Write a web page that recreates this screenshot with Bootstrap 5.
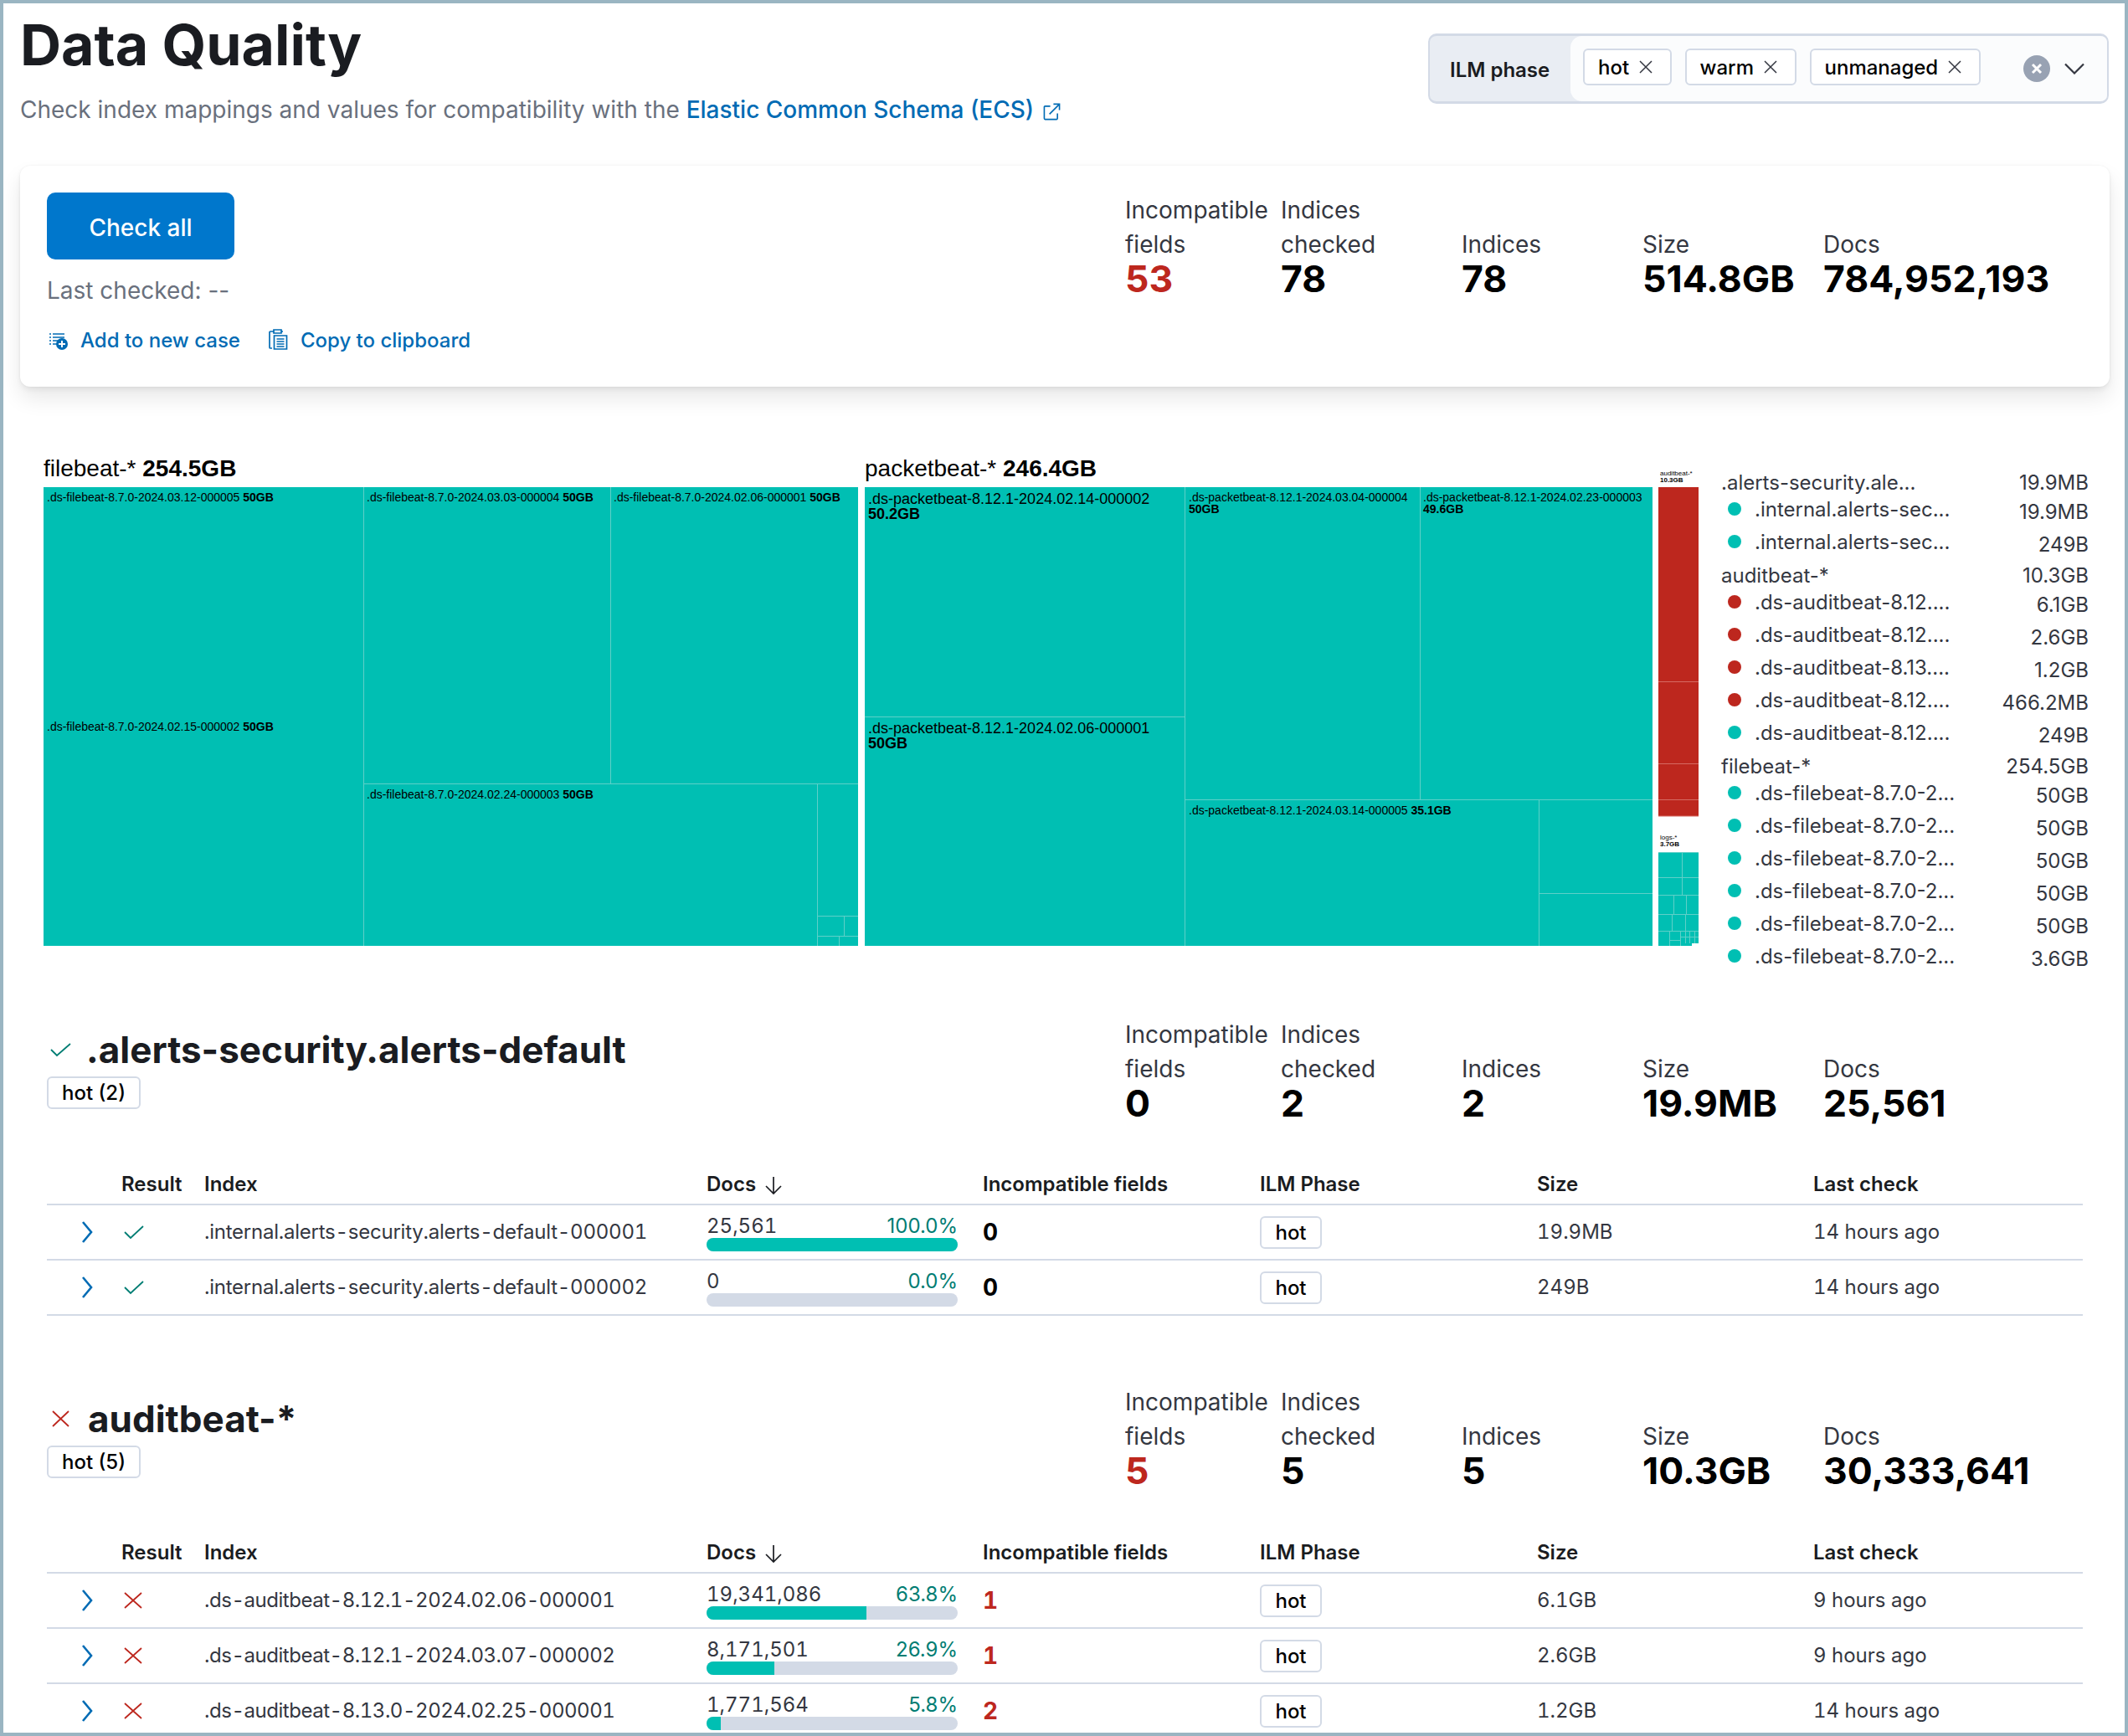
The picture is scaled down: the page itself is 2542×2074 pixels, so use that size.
<!doctype html>
<html lang="en">
<head>
<meta charset="utf-8">
<title>Data Quality</title>
<link href="https://cdn.jsdelivr.net/npm/bootstrap@5.3.0/dist/css/bootstrap.min.css" rel="stylesheet">
<style>
html,body{margin:0;background:#fff}
body{font-family:Inter,"Noto Sans",sans-serif;color:#343741}
.frame{height:2074px;border:4px solid #9ab5c2;overflow:hidden;background:#fff}
.head-row{height:194px;padding:0 19px 0 20px}
.page-title{font-size:68px;line-height:72px;font-weight:700;color:#1a1c21;margin:13px 0 0;letter-spacing:0}
.page-sub{font-size:28px;line-height:40px;color:#69707d;margin:22px 0 0}
.page-sub a,.act-link{color:#006bb4;text-decoration:none;font-weight:500}
.pop-ic{margin-left:3px}
.ilm-group{width:813px;height:84px;margin-top:36px;background:#e9edf3;border:2px solid #d3dae6;border-top-width:3px;border-bottom-width:3px;border-radius:10px;overflow:hidden}
.ilm-label{width:168px;padding:3px 0 0 24px;font-size:24px;font-weight:600;color:#1a1c21}
.ilm-body{background:#fbfcfd;border-radius:14px 0 0 14px;padding:0 27px 4px 15px}
.chip-box{height:44px;border:2px solid #d3dae6;border-radius:6px;background:#fff;padding:0 19.500px 0 16px;font-size:24px;font-weight:500;color:#000;line-height:41px;white-space:nowrap}
.chip-box svg{margin-left:11px;margin-top:-4px}
.clear-dot{width:32px;height:32px;margin-left:auto;margin-right:17px;margin-top:4px}
.sum-card{margin:0 18px 0 20px;height:264px;padding:32px;border:0;border-radius:12px;box-shadow:0 0 3px rgba(0,0,0,.06),0 4px 6px rgba(0,0,0,.05),0 14px 26px rgba(0,0,0,.09)}
.check-btn{width:224px;height:80px;padding-top:9px;background:#07c;border:0;border-radius:10px;color:#fff;font-size:28px;font-weight:500}
.last-line{font-size:28px;line-height:40px;color:#69707d;margin-top:17px}
.act-row{margin-top:20px;font-size:24px;line-height:40px}
.add-ic{margin:0 15px 0 3px}
.clip-ic{margin:-4px 15px 0 34px}
.stat-wrap{width:1144px;flex:none}
.sum-card .stat-wrap{padding-top:1px}
.stat-a{width:186px}.stat-b,.stat-c,.stat-d{width:216px}.stat-e{width:310px}
.stat-col{display:flex;flex-direction:column;justify-content:flex-end}
.stat-lab{font-size:28px;line-height:41px;color:#343741;font-weight:400}
.stat-val{font-size:44.500px;line-height:46px;font-weight:700;color:#000;margin-top:-3px;white-space:nowrap}
.stat-bad{color:#bd271e}
.map-row{height:600px;margin-top:78px}
.map-svg{flex:none;display:block}
.map-svg text{font-family:"Liberation Sans",Arial,sans-serif;fill:#000}
.lbl-s{font-size:14px}.lbl-m{font-size:18px}.lbl-l{font-size:28px}.lbl-t{font-size:8px}
.bold-t{font-weight:700}
.tile-teal{fill:#00bfb3}.tile-red{fill:#bd271e}
.ln-teal{stroke:#5fd0c8;stroke-width:1}.ln-red{stroke:#d66a63;stroke-width:1}
.leg-box{width:445px;padding:23.500px 0 0 6px;font-size:24px;color:#343741;flex:none}
.leg-grp{height:26px;line-height:26px;margin-top:7px}
.leg-box .leg-grp:first-child{margin-top:0}
.leg-box .leg-far{margin-top:7.500px}
.leg-sub{height:39px;line-height:34px;padding-top:2px}
.leg-dot{width:16px;height:16px;border-radius:50%;margin-left:8px;margin-right:16px;flex:none}
.dot-ok{background:#00bfb3}.dot-bad{background:#bd271e}
.leg-val{margin-left:auto;padding-top:3px}
.leg-grp .leg-val{padding-top:0}
.sect-block{padding:0 50px 0 52px;margin-top:83px}
.sect-one{margin-top:76px}
.sect-title{font-size:44px;line-height:56px;font-weight:700;color:#1a1c21;margin:0}
.sect-left{padding-top:10px}
.sect-two .sect-left{padding-top:12px}
.sect-icon{width:25px;margin:0 18px 0 4px;flex:none}
.sect-two .sect-icon{margin-right:20px}
.hot-tag{display:inline-block;height:39px;border:2px solid #d3dae6;border-radius:6px;background:#fff;padding:0 16px;font-size:24px;font-weight:500;color:#000;line-height:36px;margin-top:4px}
.dq-table{table-layout:fixed;margin:50px 0 0;width:2432px;--bs-table-bg:transparent;--bs-table-color:#343741}
.sect-two .dq-table{margin-top:51px}
.dq-table th{height:48px;padding:0;border-bottom:2px solid #d3dae6;font-size:24px;font-weight:600;color:#1a1c21;vertical-align:middle}
.dq-table td{height:66px;padding:0;border-bottom:2px solid #d3dae6;font-size:24px;font-variant-numeric:tabular-nums;color:#343741;vertical-align:middle;white-space:nowrap}
.dq-table td.idx-int{letter-spacing:-.24px}
.dq-table td.idx-ds{letter-spacing:-.47px}
.c-exp{width:89px}.c-res{width:99px}.c-idx{width:600px}.c-doc{width:330px}.c-inc{width:331px}.c-ilm{width:331px}.c-siz{width:330px}.c-las{width:322px}
.exp-ic{margin-left:41px;display:block}
.res-ic{margin-left:3px;display:block}
.sort-ic{margin-left:10px}
.doc-box{width:300px}
.doc-top{font-size:24px;line-height:30px;height:30px;padding-top:1px}
.doc-pct{color:#017d73;font-variant-numeric:normal}
.doc-bar{height:16px;background:#d3dae6;border-radius:8px}
.doc-bar .progress-bar{background:#00bfb3}
.inc-n{font-size:28px;font-weight:700;color:#000}
.inc-bad{color:#bd271e}
.td-tag{display:block;width:74px;height:39px;border:2px solid #d3dae6;border-radius:6px;background:#fff;text-align:center;font-size:24px;font-weight:500;color:#000;line-height:35px}
</style>
</head>
<body>
<div class="frame">

<div class="head-row d-flex justify-content-between align-items-start">
  <div>
    <h1 class="page-title">Data Quality</h1>
    <p class="page-sub">Check index mappings and values for compatibility with the <a href="#">Elastic Common Schema (ECS) <svg class="pop-ic" width="21" height="21" viewBox="0 0 22 22" fill="none" stroke="#006bb4" stroke-width="1.700"><path d="M9 4H2.500a1 1 0 0 0-1 1v14.500a1 1 0 0 0 1 1H17a1 1 0 0 0 1-1V13"/><path d="M8 14 20 2M13 1.500h7.500V9"/></svg></a></p>
  </div>
  <div class="ilm-group d-flex">
    <div class="ilm-label d-flex align-items-center">ILM phase</div>
    <div class="ilm-body flex-grow-1 d-flex align-items-center">
      <span class="chip-box me-3">hot<svg width="18" height="18" viewBox="0 0 18 18" fill="none" stroke="#343741" stroke-width="1.500"><path d="M2 2l14 14M16 2 2 16"/></svg></span>
      <span class="chip-box me-3">warm<svg width="18" height="18" viewBox="0 0 18 18" fill="none" stroke="#343741" stroke-width="1.500"><path d="M2 2l14 14M16 2 2 16"/></svg></span>
      <span class="chip-box">unmanaged<svg width="18" height="18" viewBox="0 0 18 18" fill="none" stroke="#343741" stroke-width="1.500"><path d="M2 2l14 14M16 2 2 16"/></svg></span>
      <svg class="clear-dot" viewBox="0 0 32 32"><circle cx="16" cy="16" r="16" fill="#98a2b3"/><path d="M11 11l10 10M21 11 11 21" stroke="#fff" stroke-width="3"/></svg>
      <svg width="24" height="14" viewBox="0 0 24 14" fill="none" stroke="#343741" stroke-width="2.200" class="mt-1"><path d="M1 1.500l11 11 11-11"/></svg>
    </div>
  </div>
</div>

<div class="card sum-card d-flex flex-row justify-content-between">
  <div>
    <button class="btn check-btn" type="button">Check all</button>
    <div class="last-line">Last checked: --</div>
    <div class="act-row d-flex align-items-center">
      <a class="act-link d-flex align-items-center" href="#"><svg class="add-ic" width="22" height="22" viewBox="0 0 22 22"><path d="M0 3h2M4 3h14M0 7h2M4 7h14M0 11h2M4 11h7M0 15h2M4 15h5" stroke="#006bb4" stroke-width="1.600" fill="none"/><circle cx="15" cy="15" r="7" fill="#006bb4"/><path d="M15 11v8M11 15h8" stroke="#fff" stroke-width="2"/></svg>Add to new case</a>
      <a class="act-link d-flex align-items-center" href="#"><svg class="clip-ic" width="23" height="26" viewBox="0 0 23 26" fill="none" stroke="#006bb4" stroke-width="1.700"><path d="M6 4H2a1 1 0 0 0-1 1v18a1 1 0 0 0 1 1h2M17 4h-2M6 2h9v4H6zM6.500 9h15v16h-15zM9.500 13h9M9.500 16h9M9.500 19h9M9.500 22h9"/></svg>Copy to clipboard</a>
    </div>
  </div>
  <div class="stat-wrap d-flex">
    <div class="stat-col stat-a align-self-start"><div class="stat-lab">Incompatible<br>fields</div><div class="stat-val stat-bad">53</div></div>
    <div class="stat-col stat-b align-self-start"><div class="stat-lab">Indices<br>checked</div><div class="stat-val">78</div></div>
    <div class="stat-col stat-c align-self-start"><div class="stat-lab"><br>Indices</div><div class="stat-val">78</div></div>
    <div class="stat-col stat-d align-self-start"><div class="stat-lab"><br>Size</div><div class="stat-val">514.8GB</div></div>
    <div class="stat-col stat-e align-self-start"><div class="stat-lab"><br>Docs</div><div class="stat-val">784,952,193</div></div>
  </div>
</div>

<div class="map-row d-flex">
  <svg class="map-svg" width="2046" height="600" viewBox="4 540 2046 600">
    <text class="lbl-l" x="52" y="569">filebeat-* <tspan class="bold-t">254.5GB</tspan></text>
    <rect class="tile-teal" x="52" y="582" width="973" height="548"/>
    <path class="ln-teal" fill="none" d="M434.500 582V1130M729.500 582V936M434 936.500H1025M976.500 936V1130M976 1094.500H1025M1008.500 1094V1118M976 1118.500H1025M1002.500 1118V1130"/>
    <text class="lbl-s" x="56" y="599">.ds-filebeat-8.7.0-2024.03.12-000005 <tspan class="bold-t">50GB</tspan></text>
    <text class="lbl-s" x="56" y="873">.ds-filebeat-8.7.0-2024.02.15-000002 <tspan class="bold-t">50GB</tspan></text>
    <text class="lbl-s" x="438" y="599">.ds-filebeat-8.7.0-2024.03.03-000004 <tspan class="bold-t">50GB</tspan></text>
    <text class="lbl-s" x="733" y="599">.ds-filebeat-8.7.0-2024.02.06-000001 <tspan class="bold-t">50GB</tspan></text>
    <text class="lbl-s" x="438" y="954">.ds-filebeat-8.7.0-2024.02.24-000003 <tspan class="bold-t">50GB</tspan></text>

    <text class="lbl-l" x="1033" y="569">packetbeat-* <tspan class="bold-t">246.4GB</tspan></text>
    <rect class="tile-teal" x="1033" y="582" width="941" height="548"/>
    <path class="ln-teal" fill="none" d="M1415.500 582V1130M1033 856.500H1415M1696.500 582V955M1415 955.500H1974M1838.500 955V1130M1838 1067.500H1974"/>
    <text class="lbl-m" x="1037" y="602">.ds-packetbeat-8.12.1-2024.02.14-000002</text>
    <text class="lbl-m bold-t" x="1037" y="620">50.2GB</text>
    <text class="lbl-m" x="1037" y="876">.ds-packetbeat-8.12.1-2024.02.06-000001</text>
    <text class="lbl-m bold-t" x="1037" y="894">50GB</text>
    <text class="lbl-s" x="1420" y="599">.ds-packetbeat-8.12.1-2024.03.04-000004</text>
    <text class="lbl-s bold-t" x="1420" y="613">50GB</text>
    <text class="lbl-s" x="1700" y="599">.ds-packetbeat-8.12.1-2024.02.23-000003</text>
    <text class="lbl-s bold-t" x="1700" y="613">49.6GB</text>
    <text class="lbl-s" x="1420" y="973">.ds-packetbeat-8.12.1-2024.03.14-000005 <tspan class="bold-t">35.1GB</tspan></text>

    <text class="lbl-t" x="1983" y="568">auditbeat-*</text>
    <text class="lbl-t bold-t" x="1983" y="576">10.3GB</text>
    <rect class="tile-red" x="1981" y="582" width="48" height="393"/>
    <path class="ln-red" fill="none" d="M1981 814.500H2029M1981 912.500H2029M1981 955.500H2029M1981 975H2029"/>

    <text class="lbl-t" x="1983" y="1003">logs-*</text>
    <text class="lbl-t bold-t" x="1983" y="1011">3.7GB</text>
    <path class="tile-teal" d="M1981 1018H2029V1127H2021V1130H1981Z"/>
    <path class="ln-teal" fill="none" d="M1981 1018.500H2029M1981 1048.500H2029M2009.500 1018V1069M1981 1069.500H2029M1999.500 1069V1092M2014.500 1069V1092M1981 1092.500H2029M1997.500 1092V1112M2013.500 1092V1112M1981 1112.500H2029M1994.500 1112V1130M2007.500 1112V1130M1994 1123.500H2007M2007 1119.500H2029M2013.500 1112V1127M2018.500 1112V1127M2024.500 1112V1127"/>
  </svg>
  <div class="leg-box">
    <div class="leg-grp d-flex"><span>.alerts-security.ale...</span><span class="leg-val">19.9MB</span></div>
    <div class="leg-sub d-flex align-items-start"><span class="leg-dot dot-ok mt-2"></span><span>.internal.alerts-sec...</span><span class="leg-val">19.9MB</span></div>
    <div class="leg-sub d-flex align-items-start"><span class="leg-dot dot-ok mt-2"></span><span>.internal.alerts-sec...</span><span class="leg-val">249B</span></div>
    <div class="leg-grp d-flex"><span>auditbeat-*</span><span class="leg-val">10.3GB</span></div>
    <div class="leg-sub d-flex align-items-start"><span class="leg-dot dot-bad mt-2"></span><span>.ds-auditbeat-8.12....</span><span class="leg-val">6.1GB</span></div>
    <div class="leg-sub d-flex align-items-start"><span class="leg-dot dot-bad mt-2"></span><span>.ds-auditbeat-8.12....</span><span class="leg-val">2.6GB</span></div>
    <div class="leg-sub d-flex align-items-start"><span class="leg-dot dot-bad mt-2"></span><span>.ds-auditbeat-8.13....</span><span class="leg-val">1.2GB</span></div>
    <div class="leg-sub d-flex align-items-start"><span class="leg-dot dot-bad mt-2"></span><span>.ds-auditbeat-8.12....</span><span class="leg-val">466.2MB</span></div>
    <div class="leg-sub d-flex align-items-start"><span class="leg-dot dot-ok mt-2"></span><span>.ds-auditbeat-8.12....</span><span class="leg-val">249B</span></div>
    <div class="leg-grp leg-far d-flex"><span>filebeat-*</span><span class="leg-val">254.5GB</span></div>
    <div class="leg-sub d-flex align-items-start"><span class="leg-dot dot-ok mt-2"></span><span>.ds-filebeat-8.7.0-2...</span><span class="leg-val">50GB</span></div>
    <div class="leg-sub d-flex align-items-start"><span class="leg-dot dot-ok mt-2"></span><span>.ds-filebeat-8.7.0-2...</span><span class="leg-val">50GB</span></div>
    <div class="leg-sub d-flex align-items-start"><span class="leg-dot dot-ok mt-2"></span><span>.ds-filebeat-8.7.0-2...</span><span class="leg-val">50GB</span></div>
    <div class="leg-sub d-flex align-items-start"><span class="leg-dot dot-ok mt-2"></span><span>.ds-filebeat-8.7.0-2...</span><span class="leg-val">50GB</span></div>
    <div class="leg-sub d-flex align-items-start"><span class="leg-dot dot-ok mt-2"></span><span>.ds-filebeat-8.7.0-2...</span><span class="leg-val">50GB</span></div>
    <div class="leg-sub d-flex align-items-start"><span class="leg-dot dot-ok mt-2"></span><span>.ds-filebeat-8.7.0-2...</span><span class="leg-val">3.6GB</span></div>
  </div>
</div>

<section class="sect-block sect-one">
  <div class="d-flex justify-content-between">
    <div class="sect-left">
      <div class="d-flex align-items-center">
        <svg class="sect-icon" height="17" viewBox="0 0 25 17" fill="none" stroke="#017d73" stroke-width="1.800"><path d="M1 8l7 7L24 1"/></svg>
        <h2 class="sect-title">.alerts-security.alerts-default</h2>
      </div>
      <span class="hot-tag">hot (2)</span>
    </div>
    <div class="stat-wrap d-flex">
      <div class="stat-col stat-a align-self-start"><div class="stat-lab">Incompatible<br>fields</div><div class="stat-val">0</div></div>
      <div class="stat-col stat-b align-self-start"><div class="stat-lab">Indices<br>checked</div><div class="stat-val">2</div></div>
      <div class="stat-col stat-c align-self-start"><div class="stat-lab"><br>Indices</div><div class="stat-val">2</div></div>
      <div class="stat-col stat-d align-self-start"><div class="stat-lab"><br>Size</div><div class="stat-val">19.9MB</div></div>
      <div class="stat-col stat-e align-self-start"><div class="stat-lab"><br>Docs</div><div class="stat-val">25,561</div></div>
    </div>
  </div>
  <table class="table dq-table">
    <colgroup><col class="c-exp"><col class="c-res"><col class="c-idx"><col class="c-doc"><col class="c-inc"><col class="c-ilm"><col class="c-siz"><col class="c-las"></colgroup>
    <thead><tr><th></th><th>Result</th><th>Index</th><th>Docs<svg class="sort-ic" width="22" height="22" viewBox="0 0 22 22" fill="none" stroke="#1a1c21" stroke-width="1.700"><path d="M11 1v20M2 12l9 9 9-9"/></svg></th><th>Incompatible fields</th><th>ILM Phase</th><th>Size</th><th>Last check</th></tr></thead>
    <tbody>
      <tr>
        <td><svg class="exp-ic" width="14" height="26" viewBox="0 0 14 26" fill="none" stroke="#006bb4" stroke-width="2.600"><path d="M2 1l10 12L2 25"/></svg></td>
        <td><svg class="res-ic" width="24" height="17" viewBox="0 0 24 17" fill="none" stroke="#017d73" stroke-width="1.800"><path d="M1 8l7 7L23 1"/></svg></td>
        <td class="idx-int">.internal.alerts-security.alerts-default-000001</td>
        <td><div class="doc-box"><div class="doc-top d-flex justify-content-between"><span>25,561</span><span class="doc-pct">100.0%</span></div><div class="progress doc-bar"><div class="progress-bar" style="width:100%"></div></div></div></td>
        <td><span class="inc-n">0</span></td>
        <td><span class="td-tag">hot</span></td>
        <td>19.9MB</td>
        <td>14 hours ago</td>
      </tr>
      <tr>
        <td><svg class="exp-ic" width="14" height="26" viewBox="0 0 14 26" fill="none" stroke="#006bb4" stroke-width="2.600"><path d="M2 1l10 12L2 25"/></svg></td>
        <td><svg class="res-ic" width="24" height="17" viewBox="0 0 24 17" fill="none" stroke="#017d73" stroke-width="1.800"><path d="M1 8l7 7L23 1"/></svg></td>
        <td class="idx-int">.internal.alerts-security.alerts-default-000002</td>
        <td><div class="doc-box"><div class="doc-top d-flex justify-content-between"><span>0</span><span class="doc-pct">0.0%</span></div><div class="progress doc-bar"><div class="progress-bar" style="width:0%"></div></div></div></td>
        <td><span class="inc-n">0</span></td>
        <td><span class="td-tag">hot</span></td>
        <td>249B</td>
        <td>14 hours ago</td>
      </tr>
    </tbody>
  </table>
</section>

<section class="sect-block sect-two">
  <div class="d-flex justify-content-between">
    <div class="sect-left">
      <div class="d-flex align-items-center">
        <svg class="sect-icon" height="20" viewBox="0 0 25 20" fill="none" stroke="#bd271e" stroke-width="1.800"><path d="M3 1l19 18M22 1 3 19"/></svg>
        <h2 class="sect-title">auditbeat-*</h2>
      </div>
      <span class="hot-tag">hot (5)</span>
    </div>
    <div class="stat-wrap d-flex">
      <div class="stat-col stat-a align-self-start"><div class="stat-lab">Incompatible<br>fields</div><div class="stat-val stat-bad">5</div></div>
      <div class="stat-col stat-b align-self-start"><div class="stat-lab">Indices<br>checked</div><div class="stat-val">5</div></div>
      <div class="stat-col stat-c align-self-start"><div class="stat-lab"><br>Indices</div><div class="stat-val">5</div></div>
      <div class="stat-col stat-d align-self-start"><div class="stat-lab"><br>Size</div><div class="stat-val">10.3GB</div></div>
      <div class="stat-col stat-e align-self-start"><div class="stat-lab"><br>Docs</div><div class="stat-val">30,333,641</div></div>
    </div>
  </div>
  <table class="table dq-table">
    <colgroup><col class="c-exp"><col class="c-res"><col class="c-idx"><col class="c-doc"><col class="c-inc"><col class="c-ilm"><col class="c-siz"><col class="c-las"></colgroup>
    <thead><tr><th></th><th>Result</th><th>Index</th><th>Docs<svg class="sort-ic" width="22" height="22" viewBox="0 0 22 22" fill="none" stroke="#1a1c21" stroke-width="1.700"><path d="M11 1v20M2 12l9 9 9-9"/></svg></th><th>Incompatible fields</th><th>ILM Phase</th><th>Size</th><th>Last check</th></tr></thead>
    <tbody>
      <tr>
        <td><svg class="exp-ic" width="14" height="26" viewBox="0 0 14 26" fill="none" stroke="#006bb4" stroke-width="2.600"><path d="M2 1l10 12L2 25"/></svg></td>
        <td><svg class="res-ic" width="22" height="20" viewBox="0 0 22 20" fill="none" stroke="#bd271e" stroke-width="1.800"><path d="M1 1l20 18M21 1 1 19"/></svg></td>
        <td class="idx-ds">.ds-auditbeat-8.12.1-2024.02.06-000001</td>
        <td><div class="doc-box"><div class="doc-top d-flex justify-content-between"><span>19,341,086</span><span class="doc-pct">63.8%</span></div><div class="progress doc-bar"><div class="progress-bar" style="width:63.8%"></div></div></div></td>
        <td><span class="inc-n inc-bad">1</span></td>
        <td><span class="td-tag">hot</span></td>
        <td>6.1GB</td>
        <td>9 hours ago</td>
      </tr>
      <tr>
        <td><svg class="exp-ic" width="14" height="26" viewBox="0 0 14 26" fill="none" stroke="#006bb4" stroke-width="2.600"><path d="M2 1l10 12L2 25"/></svg></td>
        <td><svg class="res-ic" width="22" height="20" viewBox="0 0 22 20" fill="none" stroke="#bd271e" stroke-width="1.800"><path d="M1 1l20 18M21 1 1 19"/></svg></td>
        <td class="idx-ds">.ds-auditbeat-8.12.1-2024.03.07-000002</td>
        <td><div class="doc-box"><div class="doc-top d-flex justify-content-between"><span>8,171,501</span><span class="doc-pct">26.9%</span></div><div class="progress doc-bar"><div class="progress-bar" style="width:26.9%"></div></div></div></td>
        <td><span class="inc-n inc-bad">1</span></td>
        <td><span class="td-tag">hot</span></td>
        <td>2.6GB</td>
        <td>9 hours ago</td>
      </tr>
      <tr>
        <td><svg class="exp-ic" width="14" height="26" viewBox="0 0 14 26" fill="none" stroke="#006bb4" stroke-width="2.600"><path d="M2 1l10 12L2 25"/></svg></td>
        <td><svg class="res-ic" width="22" height="20" viewBox="0 0 22 20" fill="none" stroke="#bd271e" stroke-width="1.800"><path d="M1 1l20 18M21 1 1 19"/></svg></td>
        <td class="idx-ds">.ds-auditbeat-8.13.0-2024.02.25-000001</td>
        <td><div class="doc-box"><div class="doc-top d-flex justify-content-between"><span>1,771,564</span><span class="doc-pct">5.8%</span></div><div class="progress doc-bar"><div class="progress-bar" style="width:5.8%"></div></div></div></td>
        <td><span class="inc-n inc-bad">2</span></td>
        <td><span class="td-tag">hot</span></td>
        <td>1.2GB</td>
        <td>14 hours ago</td>
      </tr>
    </tbody>
  </table>
</section>

</div>
<script src="https://cdn.jsdelivr.net/npm/bootstrap@5.3.0/dist/js/bootstrap.bundle.min.js"></script>
</body>
</html>
